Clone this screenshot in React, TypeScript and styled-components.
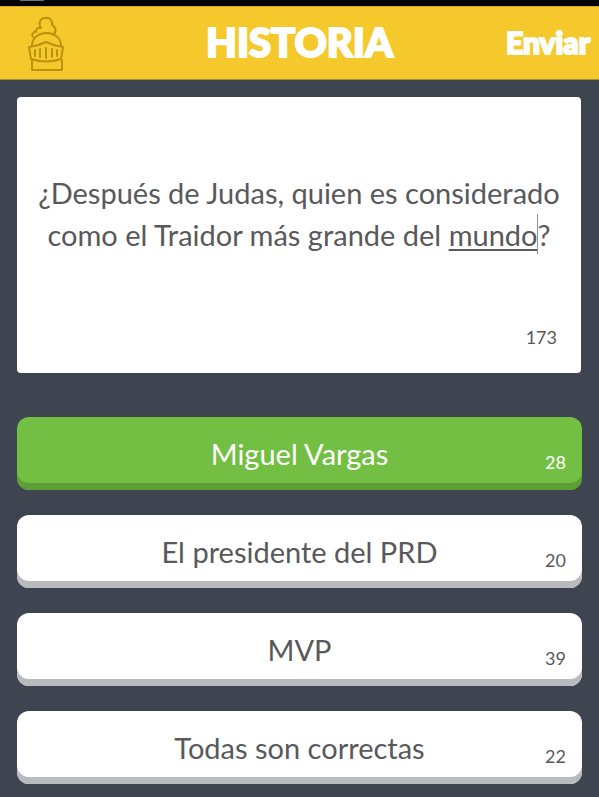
import React, { useState } from "react";
import styled, { createGlobalStyle } from "styled-components";

const GlobalStyle = createGlobalStyle`
  *, *::before, *::after { box-sizing: border-box; }
  body {
    margin: 0;
    background: #3f4550;
    color: #58595b;
    font-family: Lato, "Open Sans", sans-serif;
  }
`;

const Screen = styled.div`
  display: flex;
  flex-direction: column;
  min-height: 100vh;
`;

const StatusBar = styled.div`
  display: flex;
  height: 6px;
  padding-left: 20px;
  background: #000;
`;

const StatusMark = styled.span`
  width: 24px;
  height: 1px;
  border-radius: 0 0 2px 2px;
  background: #77727c;
`;

const Header = styled.header`
  display: grid;
  grid-template-columns: 1fr auto 1fr;
  align-items: center;
  height: 74px;
  padding: 0 9px;
  background: #f5c92c;
  border-top: 1px solid #d3ac26;
  border-bottom: 1px solid #a88c31;
  color: #fff;
`;

const Helmet = styled.svg`
  display: block;
  width: 38px;
  height: 56px;
  margin-left: 18px;
  fill: none;
  stroke: #b8930d;
  stroke-width: 2;
  stroke-linejoin: round;
  stroke-linecap: round;
`;

const Title = styled.h1`
  margin: 0;
  padding-bottom: 2px;
  font-size: 40px;
  font-weight: 900;
  line-height: 48px;
  -webkit-text-stroke: 2px #fff;
`;

const SendButton = styled.button`
  justify-self: end;
  padding: 0 0 2px;
  border: 0;
  background: none;
  color: #fff;
  font: inherit;
  font-size: 30px;
  font-weight: 900;
  line-height: 36px;
  -webkit-text-stroke: 2px #fff;
  cursor: pointer;
`;

const Form = styled.main`
  display: flex;
  flex-direction: column;
  gap: 44px;
  padding: 17px 17px 12px;
`;

const QuestionCard = styled.section`
  display: flex;
  flex-direction: column;
  min-height: 276px;
  margin-right: 1px;
  padding: 75px 16px 25px;
  border-radius: 4px;
  background: #fff;
`;

const QuestionText = styled.div`
  flex: 1;
  font-size: 29px;
  line-height: 42px;
  text-align: center;
  outline: none;
`;

const ActiveWord = styled.span`
  position: relative;
  text-decoration: underline;
  text-decoration-thickness: 2px;
  text-underline-offset: 3px;
  text-decoration-skip-ink: none;

  &::after {
    content: "";
    position: absolute;
    top: -3px;
    right: 0;
    width: 1px;
    height: 40px;
    background: #909194;
  }
`;

const Counter = styled.output`
  align-self: flex-end;
  font-size: 18px;
  line-height: 22px;
`;

const QuestionCounter = styled(Counter)`
  margin-right: 8px;
`;

const AnswerList = styled.div`
  display: flex;
  flex-direction: column;
  gap: 25px;
`;

const AnswerCard = styled.div<{ $correct: boolean }>`
  display: grid;
  grid-template-columns: 48px 1fr 48px;
  align-items: center;
  height: 73px;
  padding: 0 16px;
  border-radius: 12px;
  background: ${(p) => (p.$correct ? "#72bf44" : "#fff")};
  box-shadow: inset 0 -7px 0 ${(p) => (p.$correct ? "#5c9f35" : "#b9babc")};
  color: ${(p) => (p.$correct ? "#fff" : "inherit")};
`;

const AnswerInput = styled.input`
  grid-column: 2;
  width: 100%;
  min-width: 0;
  padding: 0;
  border: 0;
  outline: none;
  background: none;
  color: inherit;
  font: inherit;
  font-size: 29px;
  line-height: 42px;
  text-align: center;
`;

const AnswerCounter = styled(Counter)`
  justify-self: end;
  align-self: end;
  margin-bottom: 17px;
`;

const LIMIT = 41;

const initialAnswers = [
  { text: "Miguel Vargas", left: 28 },
  { text: "El presidente del PRD", left: 20 },
  { text: "MVP", left: 39 },
  { text: "Todas son correctas", left: 22 },
];

function HelmetIcon() {
  return (
    <Helmet viewBox="0 0 38 56" aria-hidden="true">
      <path d="M6 22C4 19 7 16 9 17C9 14 11 12 14 13C11 9 13 3 18 3C23 2 26 6 25 10C29 12 30 17 26 20" />
      <path d="M5 30C6 14 33 14 34 30" />
      <path d="M2 32Q11 31 19 27Q27 31 36 32L34 44Q19 49 4 44Z" />
      <path d="M5 45V55H35V45" />
      <path d="M8 35V41M13 34V42M19 33V43M25 34V42M30 35V41" />
    </Helmet>
  );
}

function Answer({ text, left, index }: { text: string; left: number; index: number }) {
  const [value, setValue] = useState(text);
  const id = `answer-${index}`;
  return (
    <AnswerCard $correct={index === 0}>
      <AnswerInput
        id={id}
        aria-label={`Respuesta ${index + 1}`}
        value={value}
        maxLength={LIMIT}
        onChange={(e) => setValue(e.target.value)}
      />
      <AnswerCounter htmlFor={id}>{left + text.length - value.length}</AnswerCounter>
    </AnswerCard>
  );
}

export default function App() {
  return (
    <>
      <GlobalStyle />
      <Screen>
        <StatusBar>
          <StatusMark />
        </StatusBar>
        <Header>
          <HelmetIcon />
          <Title>HISTORIA</Title>
          <SendButton type="button">Enviar</SendButton>
        </Header>
        <Form>
          <QuestionCard>
            <QuestionText
              id="question"
              role="textbox"
              aria-label="Pregunta"
              aria-multiline="true"
              contentEditable
              suppressContentEditableWarning
              spellCheck={false}
            >
              ¿Después de Judas, quien es considerado como el Traidor más grande del{" "}
              <ActiveWord>mundo</ActiveWord>?
            </QuestionText>
            <QuestionCounter htmlFor="question">173</QuestionCounter>
          </QuestionCard>
          <AnswerList>
            {initialAnswers.map((a, i) => (
              <Answer key={a.text} text={a.text} left={a.left} index={i} />
            ))}
          </AnswerList>
        </Form>
      </Screen>
    </>
  );
}
